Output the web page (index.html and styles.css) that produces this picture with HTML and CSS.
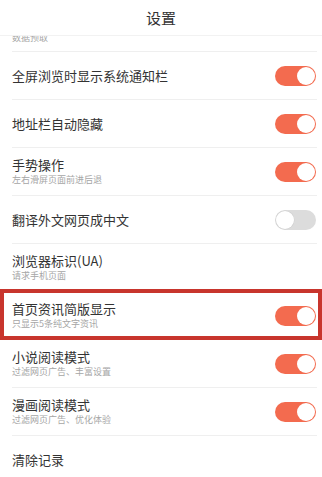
FILE: index.html
```html
<!DOCTYPE html>
<html lang="zh-CN">
<head>
  <meta charset="UTF-8" />
  <meta name="viewport" content="width=device-width, initial-scale=1" />
  <title>设置</title>
  <link rel="stylesheet" href="styles.css">
</head>
<body>
  <header class="topbar">设置</header>

  <div class="list">
    <div class="item item-cut">
      <div class="sub">数据预取</div>
    </div>
    <div class="item">
      <div class="text"><div class="title">全屏浏览时显示系统通知栏</div></div>
      <span class="switch on"></span>
    </div>
    <div class="item">
      <div class="text"><div class="title">地址栏自动隐藏</div></div>
      <span class="switch on"></span>
    </div>
    <div class="item">
      <div class="text">
        <div class="title">手势操作</div>
        <div class="sub">左右滑屏页面前进后退</div>
      </div>
      <span class="switch on"></span>
    </div>
    <div class="item">
      <div class="text"><div class="title">翻译外文网页成中文</div></div>
      <span class="switch"></span>
    </div>
    <div class="item">
      <div class="text">
        <div class="title">浏览器标识(UA)</div>
        <div class="sub">请求手机页面</div>
      </div>
    </div>
    <div class="item marked">
      <div class="text">
        <div class="title">首页资讯简版显示</div>
        <div class="sub">只显示5条纯文字资讯</div>
      </div>
      <span class="switch on"></span>
    </div>
    <div class="item">
      <div class="text">
        <div class="title">小说阅读模式</div>
        <div class="sub">过滤网页广告、丰富设置</div>
      </div>
      <span class="switch on"></span>
    </div>
    <div class="item">
      <div class="text">
        <div class="title">漫画阅读模式</div>
        <div class="sub">过滤网页广告、优化体验</div>
      </div>
      <span class="switch on"></span>
    </div>
    <div class="item">
      <div class="text"><div class="title">清除记录</div></div>
    </div>
  </div>
</body>
</html>
```

FILE: styles.css
```css
html, body {
  margin: 0;
  padding: 0;
  height: 100%;
  overflow: hidden;
  background: #fff;
  font-family: "Noto Sans CJK SC", "Noto Sans", sans-serif;
  color: #333;
}

.topbar {
  position: relative;
  z-index: 2;
  height: 35px;
  line-height: 35px;
  text-align: center;
  font-size: 15px;
  color: #333;
  background: #fff;
  border-bottom: 1px solid #f2f2f2;
}

.list {
  position: relative;
  z-index: 1;
}

.item {
  position: relative;
  display: flex;
  align-items: center;
  justify-content: space-between;
  height: 47px;
  margin: 0 5px 0 12px;
  border-bottom: 1px solid #efefef;
}

/* row scrolled half under the header */
.item-cut {
  height: 15px;
  align-items: flex-start;
}

.text {
  display: flex;
  flex-direction: column;
}

.title {
  font-size: 13px;
  line-height: 16px;
  color: #333;
}

.sub {
  font-size: 9px;
  line-height: 12px;
  margin-top: 1px;
  color: #a6a6a6;
}

.item-cut .sub {
  margin-top: -4px;
}

.switch {
  position: relative;
  width: 41px;
  height: 20px;
  margin-right: 1px;
  border-radius: 10px;
  background: #dcdcdc;
  box-sizing: border-box;
}

.switch::after {
  content: "";
  position: absolute;
  left: 1px;
  top: 1px;
  width: 18px;
  height: 18px;
  border-radius: 50%;
  background: #fff;
  box-shadow: 0 0 0 0.5px #cfcfcf;
}

.switch.on {
  background: #f36b4f;
}

.switch.on::after {
  left: 22px;
  box-shadow: none;
}

/* red highlight frame around one row */
.marked::before {
  content: "";
  position: absolute;
  left: -12px;
  right: -5px;
  top: -3px;
  bottom: -1px;
  border: 4px solid #c8352d;
  pointer-events: none;
}
```
